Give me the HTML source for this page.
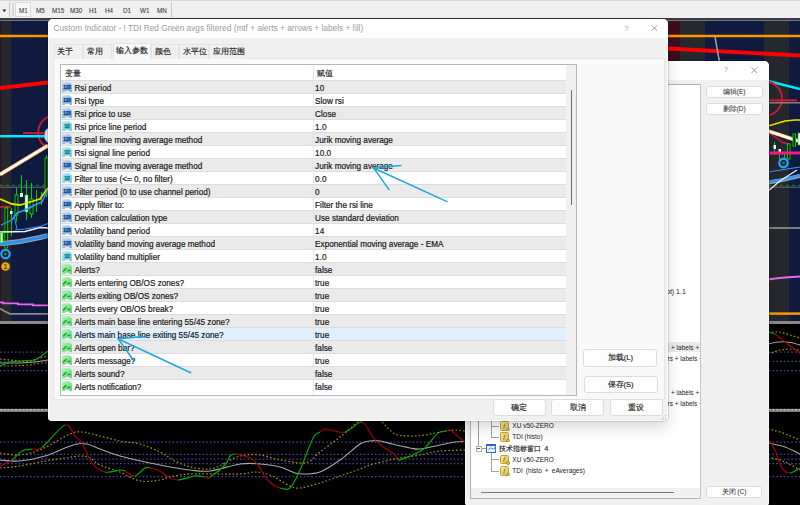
<!DOCTYPE html>
<html><head><meta charset="utf-8">
<style>
*{box-sizing:border-box}
html,body{margin:0;padding:0}
body{width:800px;height:505px;position:relative;overflow:hidden;background:#000;font-family:"Liberation Sans",sans-serif;}
.abs{position:absolute}
#tb{position:absolute;left:0;top:0;width:800px;height:20px;background:#f0f0f0;border-bottom:2px solid #3c3c3c}
#tb span{position:absolute;top:5.5px;font-size:6.3px;color:#444;line-height:9px;-webkit-text-stroke:0.1px #444}
.dlg{position:absolute;background:#f0f0f0;box-shadow:inset 0 0 0 1px rgba(255,255,255,.75),0 0 0 0.6px rgba(0,0,0,.22),0 7px 14px rgba(0,0,0,.15);overflow:hidden;border-radius:5px 5px 4px 4px}
#d1{left:48px;top:19.3px;width:619.5px;height:401.7px}
.ttl{position:absolute;left:0;top:0;right:0;background:#fff}
.btn{position:absolute;background:#fdfdfd;border:1px solid #dcdcdc;border-radius:3px;font-size:7.5px;color:#222;text-align:center}
#tab{position:absolute;left:4.6px;top:39.2px;width:612.3px;height:342px;background:#f9f9f9;border:1px solid #e6e6e6}
.tb{position:absolute;white-space:nowrap;top:25px;height:14.5px;font-size:8px;color:#1a1a1a;border:1px solid #e4e4e4;border-bottom:none;background:#f0f0f0;padding-left:2.6px;line-height:14px;-webkit-text-stroke:0.15px #1a1a1a}
#tbl{position:absolute;left:6px;top:4.6px;width:517.8px;height:331.8px;border:1px solid #b4b6bc;background:#fff;overflow:hidden}
.r{position:absolute;left:0;width:505px;height:13px;background:#fff;font-size:8.2px;color:#1a1a1a;line-height:13px;-webkit-text-stroke:0.2px #1a1a1a;box-shadow:inset 0 1px #dcdcdc}
.r.g{background:#eaeaea}
.r.sel{background:#e0f0fe}
.r .n{position:absolute;left:13.8px;top:1.5px}
.r .v{position:absolute;left:254.5px;top:1.5px}
.ic{position:absolute;left:0px;top:2.1px}
#vdiv{position:absolute;left:252px;top:0;width:1px;height:330px;background:#e6e6e6}
#sb{position:absolute;left:505px;top:0;width:12px;height:330px;background:#f0f0f0}
#d2{left:464.5px;top:61px;width:304px;height:444.5px}
#lst{position:absolute;left:5px;top:23px;width:231px;height:414.5px;border:1px solid #b0b2b8;border-right:1.2px solid #c4c6cc;background:#fff;overflow:hidden}
.ti{position:absolute;font-size:6.5px;color:#222;white-space:nowrap;line-height:9px}
.fx{position:absolute;width:9.5px;height:9.5px;border-radius:1.5px;background:linear-gradient(135deg,#f8eca0,#dcc050);border:0.6px solid #c0a040}
.fx b{position:absolute;left:2.5px;top:-0.5px;font:italic 7px 'Liberation Serif',serif;color:#6a5010}
.fx u{position:absolute;left:5.5px;top:5.5px;width:3.5px;height:3.5px;border-radius:50%;background:#e8c838;border:0.6px solid #a08020}
.win{position:absolute;width:10px;height:9px;border:1px solid #3a6fd0;border-top:2.5px solid #2a5fd0;background:#eef4ff}
.btn.sm{font-size:6.5px;line-height:10.5px}
.cj{-webkit-text-stroke:0.15px #222}
</style></head><body>
<svg width="0" height="0" style="position:absolute">
 <defs>
  <linearGradient id="ge" x1="0" y1="0" x2="1" y2="1"><stop offset="0" stop-color="#c6e0fa"/><stop offset="1" stop-color="#6ea6e4"/></linearGradient>
  <linearGradient id="gd" x1="0" y1="0" x2="1" y2="1"><stop offset="0" stop-color="#b4eef8"/><stop offset="1" stop-color="#62cce0"/></linearGradient>
  <linearGradient id="gb" x1="0" y1="0" x2="1" y2="1"><stop offset="0" stop-color="#b8f8c0"/><stop offset="1" stop-color="#50d460"/></linearGradient>
  <path id="ish" d="M0.9,1.6 Q0.9,0.3 2.1,0.3 L8.4,0.3 L10.9,2.6 L10.9,9.9 L8.8,9.9 L8.3,8.7 L4.6,8.7 L4.1,9.9 L0.9,9.9 Z"/>
  <g id="ie"><use href="#ish" fill="url(#ge)"/><text x="5.9" y="7.3" font-size="5" font-weight="bold" font-family="Liberation Sans" text-anchor="middle" fill="#1e4c88" stroke="#1e4c88" stroke-width="0.45" letter-spacing="-0.4">123</text></g>
  <g id="id"><use href="#ish" fill="url(#gd)"/><text x="5.9" y="7.3" font-size="5" font-weight="bold" font-family="Liberation Sans" text-anchor="middle" fill="#1f7f90" stroke="#1f7f90" stroke-width="0.4" letter-spacing="-0.5">1/2</text></g>
  <g id="ib"><use href="#ish" fill="url(#gb)"/><path d="M2,7.4 L5.4,4 M6.4,6.4 L9.4,6.4" stroke="#1a9a2a" stroke-width="1.4" fill="none"/></g>
 </defs>
</svg>
<div id="tb">
 <div class="abs" style="left:0;top:0;width:800px;height:1px;background:#d6d6d6"></div>
 <svg class="abs" style="left:2px;top:8.5px" width="5" height="4"><path d="M0.3,0.5L4.3,0.5L2.3,3.2Z" fill="#303030"/></svg>
 <div class="abs" style="left:9px;top:2px;width:1px;height:15px;background:#c8c8c8"></div>
 <div class="abs" style="left:12px;top:3px;width:2px;height:13px;background:#d8d8d8"></div>
 <div class="abs" style="left:15px;top:2px;width:16px;height:15px;background:#f7f7f7;border:1px solid #dadada"></div>
 <span style="left:19px">M1</span><span style="left:36px">M5</span><span style="left:52px">M15</span><span style="left:70px">M30</span><span style="left:89px">H1</span><span style="left:105px">H4</span><span style="left:123px">D1</span><span style="left:140px">W1</span><span style="left:157px">MN</span>
 <div class="abs" style="left:171px;top:2px;width:1px;height:15px;background:#c8c8c8"></div>
</div>
<svg id="chart" width="800" height="505" viewBox="0 0 800 505" style="position:absolute;left:0;top:0">
 <defs>
  <clipPath id="cm"><rect x="0" y="20" width="800" height="301"/></clipPath>
  <clipPath id="c1"><rect x="0" y="324" width="800" height="85"/></clipPath>
  <clipPath id="c2"><rect x="0" y="412" width="800" height="93"/></clipPath>
 </defs>
 <rect x="0" y="20" width="800" height="302" fill="#0f1a3e"/>
 <rect x="0" y="20" width="1.2" height="302" fill="#3d0f1e"/>
 <rect x="1.2" y="20" width="10" height="302" fill="#25292d"/>
 <rect x="668" y="20" width="12" height="302" fill="#3d0f1e"/>
 <rect x="680" y="20" width="25" height="302" fill="#25292d"/>
 <rect x="764" y="20" width="25" height="302" fill="#25292d"/>
 <line x1="0" y1="20.5" x2="800" y2="20.5" stroke="#6a7590" stroke-width="1"/>
 <g clip-path="url(#cm)" fill="none">
  <line x1="0" y1="36" x2="800" y2="36" stroke="#ff9800" stroke-width="2.5"/>
  <polyline points="0,88 48,82.5 400,40 668,48.5 800,55.5" stroke="#ff0000" stroke-width="3.8"/>
  <line x1="715" y1="37" x2="719.5" y2="62" stroke="#a0a0a0" stroke-width="1.5"/>
  <!-- left circle -->
  <circle cx="55.5" cy="132.5" r="17.3" stroke="#dc143c" stroke-width="1.8"/>
  <circle cx="53" cy="135.3" r="9" fill="#e8e8f0" stroke="#5a6ab0" stroke-width="1"/>
  <line x1="23" y1="133.2" x2="45" y2="133.2" stroke="#dc143c" stroke-width="2"/>
  <line x1="0" y1="136.3" x2="45" y2="136.3" stroke="#00e8ff" stroke-width="2.4"/>
  <line x1="0" y1="174.5" x2="48" y2="145.5" stroke="#ffb060" stroke-width="3.8"/>
  <line x1="0" y1="174.5" x2="48" y2="145.5" stroke="#fffaf0" stroke-width="2.6"/>
  <line x1="0" y1="185.3" x2="800" y2="185.3" stroke="#00a000" stroke-width="1" stroke-dasharray="3 3"/>
  <line x1="0" y1="187.2" x2="800" y2="187.2" stroke="#6a6f80" stroke-width="1"/>
  <line x1="0" y1="207" x2="11" y2="207" stroke="#dc143c" stroke-width="1.6"/>
  <!-- candles left -->
  <g stroke="#00d000" stroke-width="1">
   <line x1="6.5" y1="206" x2="6.5" y2="248"/>
   <rect x="5" y="208" width="2.6" height="40" fill="#000"/>
   <line x1="11.5" y1="208" x2="11.5" y2="236"/>
   <line x1="16.5" y1="188" x2="16.5" y2="222"/>
   <rect x="15" y="195" width="3" height="20" fill="#0a1020"/>
   <line x1="21.5" y1="175" x2="21.5" y2="197"/>
   <line x1="26.5" y1="180" x2="26.5" y2="220"/>
   <line x1="31.5" y1="183" x2="31.5" y2="218"/>
   <rect x="30" y="199" width="3" height="15" fill="#0a1020"/>
   <line x1="36.5" y1="190" x2="36.5" y2="212"/>
   <line x1="41.5" y1="192" x2="41.5" y2="205"/>
   <line x1="46.5" y1="155" x2="46.5" y2="197"/>
   <rect x="45" y="158" width="3" height="37" fill="#0a1020"/>
  </g>
  <rect x="20" y="193" width="3" height="4" fill="#e8ffe8"/>
  <rect x="25" y="195" width="3" height="17" fill="#f0fff0" stroke="#00d000" stroke-width="0.6"/>
  <rect x="10" y="211" width="2.5" height="3" fill="#e8ffe8"/>
  <polyline points="0,199 12,204 20,205 30,202 40,199 45,192 48,188" stroke="#f0e000" stroke-width="1.8"/>
  <polyline points="12,220 17,213 25,210 35,205 42,202 48,190" stroke="#3399ff" stroke-width="1.6"/>
  <polyline points="0,232 25,231.5 40,227.5 48,228" stroke="#f4f4f4" stroke-width="1.4"/>
  <polyline points="0,243.8 20,241.5 40,237.5 48,235.6" stroke="#a0a4b0" stroke-width="5"/>
  <polyline points="0,243.8 20,241.5 40,237.5 48,235.6" stroke="#2e90f0" stroke-width="3.2"/>
  <polyline points="15,230 25,229 40,226.5 48,223.5" stroke="#3399ff" stroke-width="1.2"/>
  <polyline points="1,225 12,220" stroke="#3399ff" stroke-width="1.2"/>
  <rect x="0.3" y="232.5" width="2.6" height="10" fill="#f4fff4" stroke="#00ff00" stroke-width="0.7"/>
  <line x1="14" y1="215" x2="17" y2="229" stroke="#3399ff" stroke-width="1"/>
  <circle cx="5.5" cy="254" r="4.2" fill="#0f1a3e" stroke="#3399ff" stroke-width="2.2"/>
  <circle cx="5.5" cy="254" r="1.6" fill="#00a000"/>
  <circle cx="5.5" cy="266.5" r="4.3" fill="#e8a820"/>
  <text x="5.5" y="269.3" font-size="7" font-family="Liberation Sans" text-anchor="middle" fill="#604010" font-weight="bold">1</text>
  <polyline points="0,302.3 3,302.3 3,303.3 18,303.3 18,304.3 33,304.3 33,305.3 48,305.3" stroke="#ee66ee" stroke-width="1.8"/>
  <polyline points="0,308.5 5,311.5 10,313.8 48,313.8" stroke="#8a8a8a" stroke-width="1.8"/>
  <!-- right top and right strip -->
  <polyline points="768,81 800,89" stroke="#00e8ff" stroke-width="2.4"/>
  <circle cx="765" cy="98.5" r="17" stroke="#dc143c" stroke-width="1.8"/>
  <line x1="768" y1="100.3" x2="797" y2="100.3" stroke="#dc143c" stroke-width="2"/>
  <line x1="768" y1="102.8" x2="800" y2="102.8" stroke="#8a8a8a" stroke-width="1.4"/>
  <polyline points="768,126 775,124 785,121 795,120 800,120" stroke="#f0e000" stroke-width="1.6"/>
  <polyline points="768,132 775,137 783,143 790,144" stroke="#dc143c" stroke-width="1.4"/>
  <line x1="768" y1="131" x2="800" y2="141.5" stroke="#ffb060" stroke-width="3.6"/>
  <line x1="768" y1="131" x2="800" y2="141.5" stroke="#fffaf0" stroke-width="2.4"/>
  <g stroke="#00d000" stroke-width="1">
   <line x1="774.5" y1="142" x2="774.5" y2="155"/>
   <line x1="779.5" y1="149" x2="779.5" y2="162"/>
   <line x1="784.5" y1="152" x2="784.5" y2="158"/>
   <rect x="787.5" y="144" width="2.5" height="15" fill="#0a1020"/>
   <rect x="793" y="134" width="2.5" height="12" fill="#0a1020"/>
  </g>
  <rect x="773.5" y="145" width="2.5" height="4" fill="#f0fff0"/>
  <rect x="778.5" y="149" width="2.5" height="3" fill="#f0fff0"/>
  <rect x="798" y="133" width="2.5" height="12" fill="#f0fff0" stroke="#00d000" stroke-width="0.6"/>
  <line x1="768" y1="153" x2="800" y2="153" stroke="#ff1493" stroke-width="3"/>
  <circle cx="783.5" cy="163" r="4.2" fill="#0f1a3e" stroke="#3399ff" stroke-width="2.4"/>
  <circle cx="783.5" cy="163" r="1.6" fill="#00a000"/>
  <polyline points="768,172 800,167" stroke="#3399ff" stroke-width="1.2"/>
  <polyline points="768,182.5 780,180.5 800,176" stroke="#9aa0b0" stroke-width="4"/>
  <polyline points="768,182 780,180 800,175.5" stroke="#3399ff" stroke-width="2.6"/>
  <polyline points="768,191 780,181 797,170" stroke="#f4f4f4" stroke-width="1.2"/>
  <line x1="768" y1="228" x2="800" y2="228" stroke="#8a8a8a" stroke-width="1.8"/>
  <polyline points="768,279.5 775,278.5 785,277.5 800,276.5" stroke="#ee66ee" stroke-width="1.8"/>
  <line x1="768" y1="313.6" x2="800" y2="313.6" stroke="#ff9800" stroke-width="2.5"/>
 </g>
 <!-- separators -->
 <rect x="0" y="321" width="800" height="3" fill="#8a8a8a"/>
 <rect x="0" y="408.8" width="800" height="3.2" fill="#828282"/>
 <line x1="0" y1="409.7" x2="800" y2="409.7" stroke="#c4c4c4" stroke-width="1.2" stroke-dasharray="2 1.75"/>
 <!-- window 1 -->
 <g clip-path="url(#c1)" fill="none">
  <g stroke="#4a40a0" stroke-width="1.3" stroke-dasharray="1.6 2.15">
   <line x1="0" y1="352.2" x2="800" y2="352.2"/>
   <line x1="0" y1="361.4" x2="800" y2="361.4"/>
   <line x1="0" y1="370.6" x2="800" y2="370.6"/>
  </g>
  <polyline points="0,363 20,363 35,362 48,360" stroke="#a8a8a8" stroke-width="1"/>
  <polyline points="0,359 10,360 20,361 30,361 40,358 48,356" stroke="#a89a00" stroke-width="1.2" stroke-dasharray="1.6 2.15"/>
  <polyline points="0,366 10,366 20,365.5 30,365 40,363 48,363" stroke="#a89a00" stroke-width="1.2" stroke-dasharray="1.6 2.15"/>
  <polyline points="0,366 10,362 20,361 35,360 40,357 48,351" stroke="#00b000" stroke-width="1.1"/>
  <path d="M768,344 Q784,339 800,345" stroke="#a8a8a8" stroke-width="1"/>
  <polyline points="768,332 780,332 800,338" stroke="#a89a00" stroke-width="1.2" stroke-dasharray="1.6 2.15"/>
  <polyline points="768,354 780,350 790,349 800,350" stroke="#a89a00" stroke-width="1.2" stroke-dasharray="1.6 2.15"/>
  <polyline points="768,332 775,334" stroke="#00b000" stroke-width="1.1"/>
  <polyline points="775,334 800,353.5" stroke="#b00000" stroke-width="1.1"/>
 </g>
 <!-- window 2 -->
 <g clip-path="url(#c2)" fill="none">
<g stroke="#4a40a0" stroke-width="1.3" stroke-dasharray="1.6 2.15">
   <line x1="0" y1="442.1" x2="800" y2="442.1"/>
   <line x1="0" y1="454.4" x2="800" y2="454.4"/>
   <line x1="0" y1="459.2" x2="800" y2="459.2"/>
   <line x1="0" y1="463.7" x2="800" y2="463.7"/>
   <line x1="0" y1="476.7" x2="800" y2="476.7"/>
  </g>
<path d="M0,460C3.3,460.2 12.5,461.7 20,461C27.5,460.3 37.5,458.2 45,456C52.5,453.8 59.7,450 65,448C70.3,446 73.3,444.7 77,444C80.7,443.3 83.2,443.2 87,444C90.8,444.8 94.5,447 100,449C105.5,451 110,453.3 120,456C130,458.7 148.3,462.7 160,465C171.7,467.3 181.7,469 190,470C198.3,471 201.7,472 210,471C218.3,470 231.7,465.2 240,464C248.3,462.8 253.3,463.5 260,464C266.7,464.5 274.2,465.5 280,467C285.8,468.5 290.8,471.8 295,473C299.2,474.2 300.8,474.2 305,474C309.2,473.8 314.2,474.3 320,472C325.8,469.7 333.3,464.7 340,460C346.7,455.3 355,447.2 360,444C365,440.8 366.7,441.5 370,441C373.3,440.5 376.3,440.5 380,441C383.7,441.5 387,442.8 392,444C397,445.2 405.3,447.2 410,448C414.7,448.8 415,449.5 420,449C425,448.5 434.2,446.2 440,445C445.8,443.8 450,442.7 455,442C460,441.3 467.5,441.2 470,441" stroke="#a8a8a8" stroke-width="1.1" fill="none"/>
<path d="M0,453C3.3,453.3 13,455.7 20,455C27,454.3 33.7,452.5 42,449C50.3,445.5 63.3,436.8 70,434C76.7,431.2 78.3,432 82,432C85.7,432 85.7,432.5 92,434C98.3,435.5 112,439.3 120,441C128,442.7 133.3,442.2 140,444C146.7,445.8 154.2,449.2 160,452C165.8,454.8 170,458.5 175,461C180,463.5 185,465.7 190,467C195,468.3 200.8,468.8 205,469C209.2,469.2 211.7,469 215,468C218.3,467 220.8,465 225,463C229.2,461 234.2,457.3 240,456C245.8,454.7 253.3,454.3 260,455C266.7,455.7 273.3,458.7 280,460C286.7,461.3 295,462.8 300,463C305,463.2 306.7,462.8 310,461C313.3,459.2 315,456 320,452C325,448 333.3,442.3 340,437C346.7,431.7 355,424.2 360,420C365,415.8 366.3,411.7 370,412C373.7,412.3 377.8,418.3 382,422C386.2,425.7 390.3,431.7 395,434C399.7,436.3 405,435.8 410,436C415,436.2 420,435.7 425,435C430,434.3 435,432.8 440,432C445,431.2 450,430 455,430C460,430 467.5,431.7 470,432" stroke="#a89a00" stroke-width="1.2" stroke-dasharray="1.6 2.15" fill="none"/>
<path d="M0,468C3.3,467.7 12.5,467.2 20,466C27.5,464.8 37.5,462.3 45,461C52.5,459.7 59.2,458.8 65,458C70.8,457.2 75.8,456 80,456C84.2,456 86.7,456.5 90,458C93.3,459.5 95,462.7 100,465C105,467.3 113.3,469.3 120,472C126.7,474.7 133.3,479.7 140,481C146.7,482.3 155,480.7 160,480C165,479.3 165,478 170,477C175,476 178.3,474.5 190,474C201.7,473.5 229.2,474.3 240,474C250.8,473.7 250,471.8 255,472C260,472.2 264.2,472.7 270,475C275.8,477.3 285,483.8 290,486C295,488.2 295,488.5 300,488C305,487.5 313.3,485 320,483C326.7,481 333.3,478.3 340,476C346.7,473.7 355,470.8 360,469C365,467.2 365,466.5 370,465C375,463.5 385,461.2 390,460C395,458.8 395,458.8 400,458C405,457.2 413.3,456.2 420,455C426.7,453.8 431.7,451.8 440,451C448.3,450.2 465,450.2 470,450" stroke="#a89a00" stroke-width="1.2" stroke-dasharray="1.6 2.15" fill="none"/>
<path d="M0,466C2,465 8.3,462.5 12,460" stroke="#b00000" stroke-width="1.1" fill="none"/>
<path d="M12,460C15.7,457.5 18.7,452.8 22,451C25.3,449.2 28.7,449.6 32,449" stroke="#00b000" stroke-width="1.1" fill="none"/>
<path d="M32,449C35.3,448.4 36.5,451.5 42,447.5" stroke="#b00000" stroke-width="1.1" fill="none"/>
<path d="M42,447.5C47.5,443.5 59.5,426.9 65,425" stroke="#00b000" stroke-width="1.1" fill="none"/>
<path d="M65,425C70.5,423.1 72.2,433 75,436C77.8,439 79.2,438.5 82,443C84.8,447.5 88.2,458.2 92,463C95.8,467.8 100.3,470.8 105,472" stroke="#b00000" stroke-width="1.1" fill="none"/>
<path d="M105,472C109.7,473.2 116.7,470.2 120,470C123.3,469.8 122.5,470 125,471" stroke="#00b000" stroke-width="1.1" fill="none"/>
<path d="M125,471C127.5,472 131.7,476.5 135,476" stroke="#b00000" stroke-width="1.1" fill="none"/>
<path d="M135,476C138.3,475.5 142.5,469.3 145,468C147.5,466.7 147.5,467.5 150,468" stroke="#00b000" stroke-width="1.1" fill="none"/>
<path d="M150,468C152.5,468.5 157,469.5 160,471C163,472.5 165,475.5 168,477C171,478.5 173.5,480.2 178,480" stroke="#b00000" stroke-width="1.1" fill="none"/>
<path d="M178,480C182.5,479.8 190.5,476.5 195,476C199.5,475.5 202.5,476.8 205,477" stroke="#00b000" stroke-width="1.1" fill="none"/>
<path d="M205,477C207.5,477.2 206.7,479 210,477" stroke="#b00000" stroke-width="1.1" fill="none"/>
<path d="M210,477C213.3,475 221.7,468.5 225,465C228.3,461.5 228.3,457.8 230,456C231.7,454.2 233.3,454.2 235,454" stroke="#00b000" stroke-width="1.1" fill="none"/>
<path d="M235,454C236.7,453.8 237.5,454.3 240,455C242.5,455.7 247,456.3 250,458C253,459.7 255.5,461.8 258,465C260.5,468.2 262.7,473.8 265,477C267.3,480.2 269.5,482.2 272,484C274.5,485.8 277,487.3 280,488" stroke="#b00000" stroke-width="1.1" fill="none"/>
<path d="M280,488C283,488.7 286.7,491 290,488C293.3,485 296.7,477.2 300,470C303.3,462.8 307.5,450.8 310,445C312.5,439.2 313.3,437.2 315,435C316.7,432.8 318.3,433 320,432" stroke="#00b000" stroke-width="1.1" fill="none"/>
<path d="M320,432C321.7,431 322.5,429.2 325,429C327.5,428.8 331.7,430.5 335,431C338.3,431.5 340.8,433.5 345,432" stroke="#b00000" stroke-width="1.1" fill="none"/>
<path d="M345,432C349.2,430.5 357.2,423.5 360,422C362.8,420.5 361.2,422.7 362,423" stroke="#00b000" stroke-width="1.1" fill="none"/>
<path d="M362,423C362.8,423.3 362.8,421.2 365,424C367.2,426.8 371.7,436 375,440C378.3,444 381.7,445.5 385,448C388.3,450.5 392.8,453 395,455C397.2,457 396.3,459.5 398,460" stroke="#b00000" stroke-width="1.1" fill="none"/>
<path d="M398,460C399.7,460.5 402.2,459 405,458C407.8,457 411.7,455.7 415,454C418.3,452.3 421.7,451 425,448C428.3,445 432.5,438.7 435,436C437.5,433.3 438,432.8 440,432C442,431.2 445.3,431.3 447,431" stroke="#00b000" stroke-width="1.1" fill="none"/>
<path d="M447,431C448.7,430.7 447.8,428.8 450,430C452.2,431.2 456.7,435.3 460,438C463.3,440.7 468.3,444.7 470,446" stroke="#b00000" stroke-width="1.1" fill="none"/>
<path d="M768,443C770.8,443.7 779.7,445.2 785,447C790.3,448.8 797.5,452.8 800,454" stroke="#a8a8a8" stroke-width="1.1" fill="none"/>
<path d="M768,429C770,429.5 774.7,430.2 780,432C785.3,433.8 796.7,438.7 800,440" stroke="#a89a00" stroke-width="1.2" stroke-dasharray="1.6 2.15" fill="none"/>
<path d="M768,457C770.8,457.8 779.7,459.8 785,462C790.3,464.2 797.5,468.7 800,470" stroke="#a89a00" stroke-width="1.2" stroke-dasharray="1.6 2.15" fill="none"/>
<path d="M768,438C769.2,440 772.7,445 775,450C777.3,455 779.5,464.2 782,468C784.5,471.8 787,473 790,473" stroke="#b00000" stroke-width="1.1" fill="none"/>
<path d="M790,473C793,473 798.3,468.8 800,468" stroke="#00b000" stroke-width="1.1" fill="none"/>
 </g>
</svg>

<div id="d2" class="dlg">
 <div class="ttl" style="height:18.5px">
  <span class="abs" style="left:259.3px;top:4.3px;font-size:8px;line-height:9px;color:#a0a0a0">?</span>
  <svg class="abs" style="left:286.5px;top:5.7px" width="7" height="7"><path d="M0.3 0.3L6.2 6.2M6.2 0.3L0.3 6.2" stroke="#8a8a8a" stroke-width="0.8"/></svg>
 </div>
 <div id="lst">
  <div class="ti" style="left:195.5px;top:201.8px;font-size:7px">pt) 1.1</div>
  <div class="abs" style="left:0;top:257.2px;width:230px;height:10.2px;background:#ebebeb"></div>
  <div class="ti" style="left:200.5px;top:257.7px">+ labels + fill)</div>
  <div class="ti" style="left:197px;top:268.9px">rs + labels + fill)</div>
  <div class="ti" style="left:200.5px;top:302.5px">+ labels + fill)</div>
  <div class="ti" style="left:197px;top:313.7px">rs + labels + fill)</div>
  <div class="abs" style="left:7.5px;top:320px;width:1px;height:40.5px;background:#a0a0a0"></div>
  <div class="abs" style="left:20.5px;top:320px;width:1px;height:32px;background:#a0a0a0"></div>
  <div class="abs" style="left:20.5px;top:340.5px;width:8px;height:1px;background:#a0a0a0"></div>
  <div class="abs" style="left:20.5px;top:351.7px;width:8px;height:1px;background:#a0a0a0"></div>
  <div class="abs" style="left:20.5px;top:368px;width:1px;height:18px;background:#a0a0a0"></div>
  <div class="abs" style="left:20.5px;top:374.2px;width:8px;height:1px;background:#a0a0a0"></div>
  <div class="abs" style="left:20.5px;top:385.6px;width:8px;height:1px;background:#a0a0a0"></div>
  <i class="fx" style="left:29.3px;top:336px"><b>f</b><u></u></i><div class="ti" style="left:41.8px;top:336px">XU v50-ZERO</div>
  <i class="fx" style="left:29.3px;top:347.2px"><b>f</b><u></u></i><div class="ti" style="left:41.8px;top:347.2px">TDI (histo)</div>
  <div class="abs" style="left:5px;top:360.5px;width:6px;height:6px;border:1px solid #b0b0b0;background:#fff"></div>
  <div class="abs" style="left:6.5px;top:363px;width:3px;height:1px;background:#606060"></div>
  <div class="abs" style="left:11px;top:363.3px;width:4px;height:1px;background:#a0a0a0"></div>
  <i class="win" style="left:15.5px;top:358.5px"><svg width="8" height="5" style="position:absolute;left:0.5px;top:0.5px"><path d="M0.5,4 Q2,0.5 4,2.5 T7.5,1" stroke="#3a6fd0" stroke-width="0.8" fill="none"/></svg></i><div class="ti cj" style="left:28.9px;top:358.5px;font-size:7.4px;word-spacing:0.8px">技术指标窗口 4</div>
  <i class="fx" style="left:29.3px;top:369.7px"><b>f</b><u></u></i><div class="ti" style="left:41.8px;top:369.7px">XU v50-ZERO</div>
  <i class="fx" style="left:29.3px;top:381.1px"><b>f</b><u></u></i><div class="ti" style="left:41.8px;top:381.1px;word-spacing:1.3px">TDI (histo + eAverages)</div>
  <div class="abs" style="left:0;top:403px;width:230px;height:10.5px;background:#f0f0f0"></div>
  <div class="abs" style="left:10.5px;top:406.8px;width:193px;height:1.3px;background:#7a7a7a"></div>
 </div>
 <div class="btn sm" style="left:241.2px;top:24.5px;width:57px;height:12px">编辑(E)</div>
 <div class="btn sm" style="left:241.2px;top:41.5px;width:57px;height:12.5px">删除(D)</div>
 <div class="btn sm" style="left:241.2px;top:424.5px;width:56.5px;height:12.5px">关闭 (C)</div>
</div>

<div id="d1" class="dlg">
 <div class="ttl" style="height:18.7px"><span class="abs" style="left:5.5px;top:4.1px;font-size:8.3px;color:#9a9a9a;white-space:nowrap">Custom Indicator - ! TDI Red Green avgs filtered (mtf + alerts + arrows + labels + fill)</span>
  <span class="abs" style="left:576.3px;top:4.6px;font-size:8px;line-height:9px;color:#a0a0a0">?</span>
  <svg class="abs" style="left:603px;top:5.7px" width="7" height="7"><path d="M0.3 0.3L6.2 6.2M6.2 0.3L0.3 6.2" stroke="#8a8a8a" stroke-width="0.8"/></svg>
 </div>
 <div id="tab">
  <div id="tbl">
   <div class="abs cj" style="left:4px;top:3.8px;font-size:7.5px;color:#222">变量</div>
   <div class="abs cj" style="left:256px;top:3.5px;font-size:7.5px;color:#222">赋值</div>
   <div class="r g" style="top:15px"><svg class="ic" width="11" height="11"><use href="#ie"/></svg><span class="n">Rsi period</span><span class="v">10</span></div>
<div class="r" style="top:28px"><svg class="ic" width="11" height="11"><use href="#ie"/></svg><span class="n">Rsi type</span><span class="v">Slow rsi</span></div>
<div class="r g" style="top:41px"><svg class="ic" width="11" height="11"><use href="#ie"/></svg><span class="n">Rsi price to use</span><span class="v">Close</span></div>
<div class="r" style="top:54px"><svg class="ic" width="11" height="11"><use href="#id"/></svg><span class="n">Rsi price line period</span><span class="v">1.0</span></div>
<div class="r g" style="top:67px"><svg class="ic" width="11" height="11"><use href="#ie"/></svg><span class="n">Signal line moving average method</span><span class="v">Jurik moving average</span></div>
<div class="r" style="top:80px"><svg class="ic" width="11" height="11"><use href="#id"/></svg><span class="n">Rsi signal line period</span><span class="v">10.0</span></div>
<div class="r g" style="top:93px"><svg class="ic" width="11" height="11"><use href="#ie"/></svg><span class="n">Signal line moving average method</span><span class="v">Jurik moving average</span></div>
<div class="r" style="top:106px"><svg class="ic" width="11" height="11"><use href="#id"/></svg><span class="n">Filter to use (&lt;= 0, no filter)</span><span class="v">0.0</span></div>
<div class="r g" style="top:119px"><svg class="ic" width="11" height="11"><use href="#ie"/></svg><span class="n">Filter period (0 to use channel period)</span><span class="v">0</span></div>
<div class="r" style="top:132px"><svg class="ic" width="11" height="11"><use href="#ie"/></svg><span class="n">Apply filter to:</span><span class="v">Filter the rsi line</span></div>
<div class="r g" style="top:145px"><svg class="ic" width="11" height="11"><use href="#ie"/></svg><span class="n">Deviation calculation type</span><span class="v">Use standard deviation</span></div>
<div class="r" style="top:158px"><svg class="ic" width="11" height="11"><use href="#ie"/></svg><span class="n">Volatility band period</span><span class="v">14</span></div>
<div class="r g" style="top:171px"><svg class="ic" width="11" height="11"><use href="#ie"/></svg><span class="n">Volatility band moving average method</span><span class="v">Exponential moving average - EMA</span></div>
<div class="r" style="top:184px"><svg class="ic" width="11" height="11"><use href="#id"/></svg><span class="n">Volatility band multiplier</span><span class="v">1.0</span></div>
<div class="r g" style="top:197px"><svg class="ic" width="11" height="11"><use href="#ib"/></svg><span class="n">Alerts?</span><span class="v">false</span></div>
<div class="r" style="top:210px"><svg class="ic" width="11" height="11"><use href="#ib"/></svg><span class="n">Alerts entering OB/OS zones?</span><span class="v">true</span></div>
<div class="r g" style="top:223px"><svg class="ic" width="11" height="11"><use href="#ib"/></svg><span class="n">Alerts exiting OB/OS zones?</span><span class="v">true</span></div>
<div class="r" style="top:236px"><svg class="ic" width="11" height="11"><use href="#ib"/></svg><span class="n">Alerts every OB/OS break?</span><span class="v">true</span></div>
<div class="r g" style="top:249px"><svg class="ic" width="11" height="11"><use href="#ib"/></svg><span class="n">Alerts main base line entering 55/45 zone?</span><span class="v">true</span></div>
<div class="r sel" style="top:262px"><svg class="ic" width="11" height="11"><use href="#ib"/></svg><span class="n">Alerts main base line exiting 55/45 zone?</span><span class="v">true</span></div>
<div class="r g" style="top:275px"><svg class="ic" width="11" height="11"><use href="#ib"/></svg><span class="n">Alerts open bar?</span><span class="v">false</span></div>
<div class="r" style="top:288px"><svg class="ic" width="11" height="11"><use href="#ib"/></svg><span class="n">Alerts message?</span><span class="v">true</span></div>
<div class="r g" style="top:301px"><svg class="ic" width="11" height="11"><use href="#ib"/></svg><span class="n">Alerts sound?</span><span class="v">false</span></div>
<div class="r" style="top:314px"><svg class="ic" width="11" height="11"><use href="#ib"/></svg><span class="n">Alerts notification?</span><span class="v">false</span></div>
   <div id="vdiv"></div>
   <div id="sb"><div class="abs" style="left:5.5px;top:25px;width:1.2px;height:115px;background:#6a6a6a;border-radius:1px"></div></div>
  </div>
  <div class="btn cj" style="left:529.8px;top:290px;width:74px;height:17.3px;line-height:15px">加载(L)</div>
  <div class="btn cj" style="left:530px;top:316.5px;width:74px;height:17px;line-height:15px">保存(S)</div>
 </div>
 <div class="tb" style="left:5.5px;width:29.5px">关于</div>
 <div class="tb" style="left:35px;width:28.8px">常用</div>
 <div class="tb" style="left:64.5px;top:23.8px;height:16px;width:38.5px;background:#f9f9f9;padding-left:2.6px">输入参数</div>
 <div class="tb" style="left:103px;width:28px">颜色</div>
 <div class="tb" style="left:131px;width:30px">水平位</div>
 <div class="tb" style="left:161px;width:34px">应用范围</div>
 <div class="btn cj" style="left:444.5px;top:379.3px;width:53px;height:17px;line-height:15px">确定</div>
 <div class="btn cj" style="left:503px;top:379.3px;width:53px;height:17px;line-height:15px">取消</div>
 <div class="btn cj" style="left:561.5px;top:379.3px;width:53px;height:17px;line-height:15px">重设</div>
 <i class="abs" style="left:616.8px;top:395.7px;width:1.1px;height:1.1px;background:#b8b8b8"></i><i class="abs" style="left:615.0px;top:397.7px;width:1.1px;height:1.1px;background:#b8b8b8"></i><i class="abs" style="left:616.8px;top:397.7px;width:1.1px;height:1.1px;background:#b8b8b8"></i><i class="abs" style="left:613.2px;top:399.5px;width:1.1px;height:1.1px;background:#b8b8b8"></i><i class="abs" style="left:615.0px;top:399.5px;width:1.1px;height:1.1px;background:#b8b8b8"></i><i class="abs" style="left:616.8px;top:399.5px;width:1.1px;height:1.1px;background:#b8b8b8"></i>
</div>
<svg class="abs" style="left:0;top:0" width="800" height="505">
 <g stroke="#1ea8e0" stroke-width="1.5" stroke-linecap="round" fill="none">
  <path d="M145 336.5L118 338.7L133.7 360.5M118 338.7L190.7 372.8"/>
  <path d="M401 165.6L373.6 168L389 189.6M373.6 168L447 201.6"/>
 </g>
</svg>
</body></html>
